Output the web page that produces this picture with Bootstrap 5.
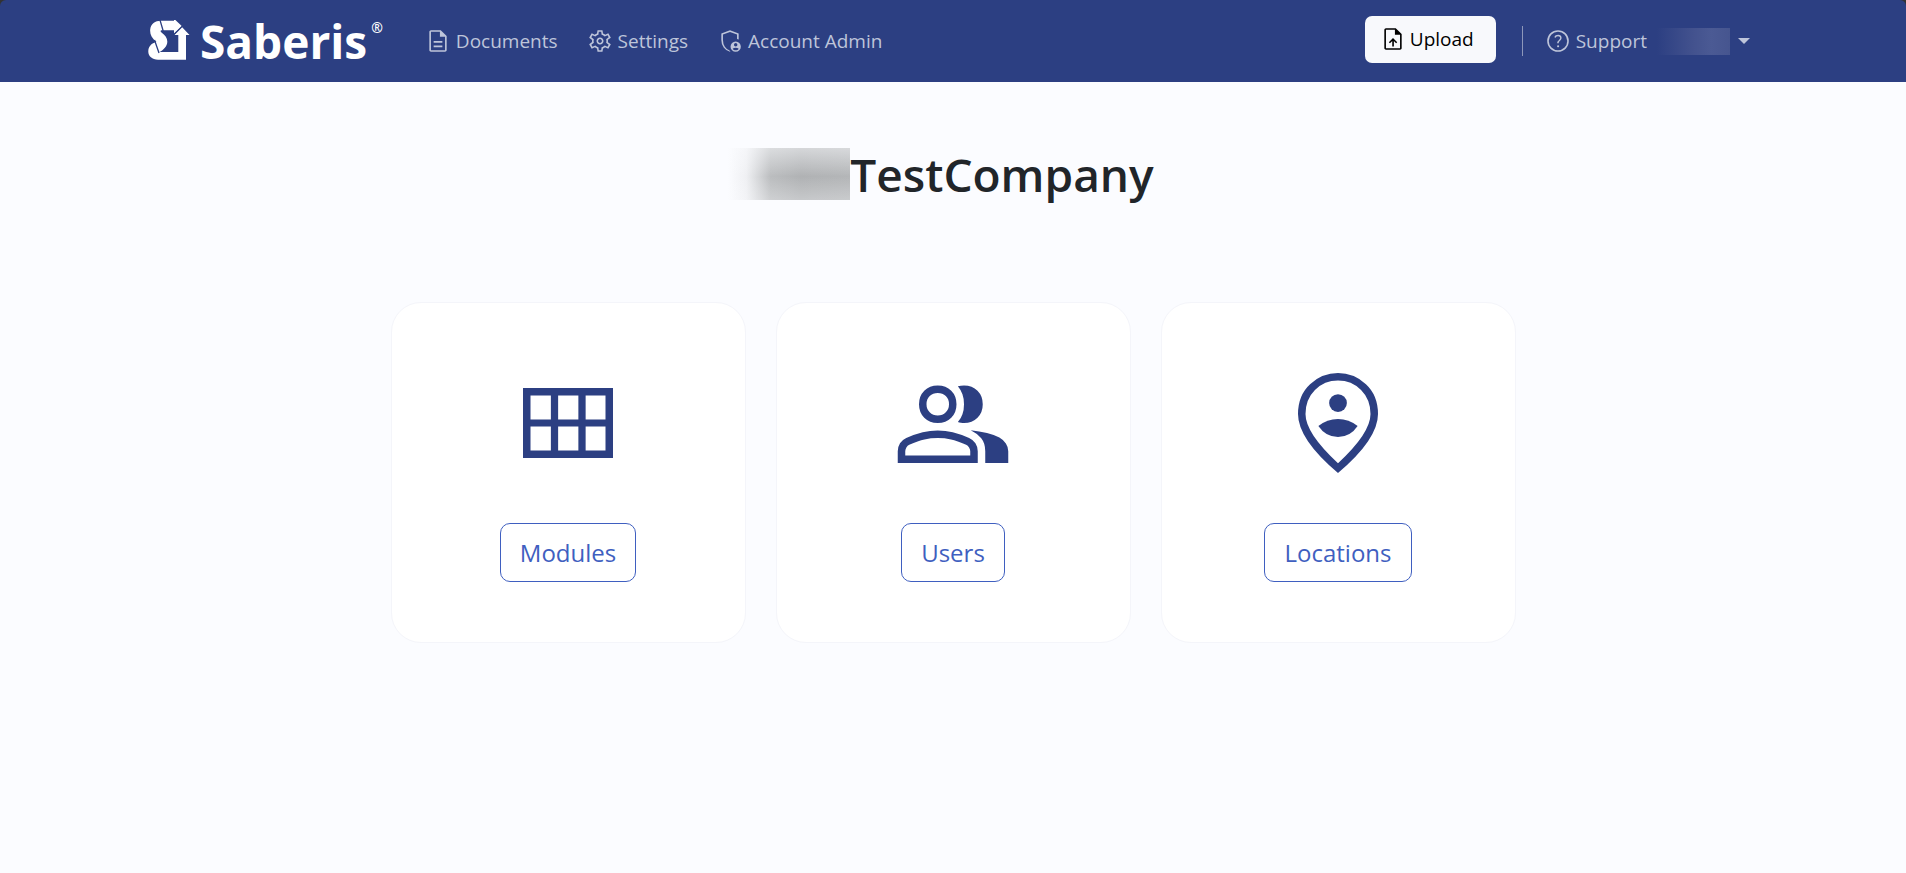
<!DOCTYPE html>
<html lang="en">
<head>
<meta charset="utf-8">
<meta name="viewport" content="width=device-width, initial-scale=1">
<title>Saberis</title>
<link href="https://cdn.jsdelivr.net/npm/bootstrap@5.3.0/dist/css/bootstrap.min.css" rel="stylesheet">
<style>
:root { --brand: #2c3f82; --accent: #3f5fc0; --nav-text: #bec5da; }
body { background: #fbfcff; font-family: "Open Sans", sans-serif; font-size: 19px; line-height: 30px; color: #212529; }
svg { display: block; flex: none; fill: currentColor; }
.page-top { background: #333; }
.site-nav { background: var(--brand); min-height: 82px; border-radius: 6px 6px 0 0; }
.site-wrap { max-width: 1650px; padding: 0 28px 0 20px; row-gap: 8px; }
.site-logo { color: #fff; gap: 10px; margin-right: 42px; }
.logo-word { font-size: 46px; line-height: 50px; font-weight: 700; }
.logo-reg { font-size: 14px; line-height: 24px; font-weight: 600; margin-left: -6px; }
.logo-cut { fill: none; stroke: var(--brand); stroke-width: 1.3; }
.site-links { column-gap: 29px; }
.site-link { display: flex; align-items: center; gap: 5px; color: var(--nav-text); text-decoration: none; white-space: nowrap; }
.site-link:hover { color: #fff; }
.nav-rule { width: 1px; height: 30px; margin: 0 22px 0 26px; background: #8d97ba; }
.btn-upload { display: flex; align-items: center; gap: 4px; height: 47px; padding: 0 22px 0 15px; border: 0; border-radius: 7px; background: #f8f9fc; color: #000; }
.btn-upload:hover { background: #e2e6f0; }
.user-toggle { display: flex; align-items: center; gap: 8px; margin-left: 10px; padding: 0; border: 0; background: none; }
.user-mask { width: 73px; height: 27px; background: linear-gradient(90deg, var(--brand), #43528e 50%, #4b5a94 75%, #46558f); }
.user-caret { border: 6px solid transparent; border-top-color: var(--nav-text); border-bottom: 0; }
.company { margin: 62px 0 98px; padding-right: 24px; font-size: 46px; line-height: 60px; font-weight: 600; }
.company-mask { width: 122px; height: 52px; background: linear-gradient(180deg, rgba(251,252,255,.5), rgba(251,252,255,0) 55%, rgba(251,252,255,.3)), linear-gradient(90deg, #fbfcff, #eff0f3 15%, #bbbdbf 35%, #b0b2b4 60%, #b4b6b8); }
.tile-wrap { max-width: 1125px; }
.tile-row { --bs-gutter-x: 30px; --bs-gutter-y: 30px; margin-top: 0; }
.tile-row > .col { margin-top: 0; margin-bottom: var(--bs-gutter-y); }
.tile { gap: 40px; border: 1px solid #f4f5fa; border-radius: 30px; background: #fff; padding: 60px 16px; }
.tile svg { color: var(--brand); }
.btn-tile { height: 59px; padding: 0 19px; border: 1px solid var(--accent); border-radius: 10px; color: var(--accent); background: #fff; font-size: 24px; }
.btn-tile:hover { background: var(--accent); color: #fff; }
</style>
</head>
<body>
<header class="page-top">
  <nav class="site-nav d-flex align-items-center" aria-label="Main">
    <div class="site-wrap container-fluid d-flex flex-wrap flex-lg-nowrap align-items-center">
      <a class="site-logo d-flex align-items-center text-decoration-none" href="#">
        <svg width="42" height="42" viewBox="3 4 42 42" aria-hidden="true">
          <path d="M16 4.700H29V2.700L37 10.200L29 17.500V14.300H17C15.500 14.300 15 15.500 16.500 16.500C20 19 22.500 22 22.300 26C22.200 30 18.500 34 14.500 36H33.300V19H29L36.700 10.700L44.500 19H41V43.700H13C7 43.700 3 40 3.300 35C3.500 30.500 6.500 27 11.500 26C6.500 22 4.800 18 5.200 13.500C5.800 8 10 4.700 16 4.700Z"/>
          <path class="logo-cut" d="M15 4L18.200 15M28.500 19L38.500 9M9.500 24L14 37"/>
        </svg>
        <span class="logo-word">Saberis</span><span class="logo-reg align-self-start">®</span>
      </a>
      <div class="site-links d-flex flex-wrap">
        <a class="site-link" href="#">
          <svg width="26" height="26" viewBox="0 -960 960 960" aria-hidden="true"><path d="M319-250h322v-60H319v60Zm0-170h322v-60H319v60ZM220-80q-24 0-42-18t-18-42v-680q0-24 18-42t42-18h361l219 219v521q0 24-18 42t-42 18H220Zm331-554v-186H220v680h520v-494H551Z"/></svg>
          Documents</a>
        <a class="site-link" href="#">
          <svg width="26" height="26" viewBox="0 -960 960 960" aria-hidden="true"><path d="m388-80-20-126q-19-7-40-19t-37-25l-118 54-93-164 108-79q-2-9-2.500-20.500T185-480q0-9 .5-20.500T188-521L80-600l93-164 118 54q16-13 37-25t40-18l20-127h184l20 126q19 7 40.500 18.500T669-710l118-54 93 164-108 77q2 10 2.500 21.500t.5 21.500q0 10-.5 21t-2.500 21l108 78-93 164-118-54q-16 13-36.500 25.500T592-206L572-80H388Zm48-60h88l14-112q33-8 62.500-25t53.500-41l106 46 40-72-94-69q4-17 6.500-33.500T715-480q0-17-2-33.500t-7-33.500l94-69-40-72-106 46q-23-26-52-43.500T538-708l-14-112h-88l-14 112q-34 7-63.500 24T306-642l-106-46-40 72 94 69q-4 17-6.500 33.500T245-480q0 17 2.500 33.500T254-413l-94 69 40 72 106-46q24 24 53.500 41t62.500 25l14 112Zm44-210q54 0 92-38t38-92q0-54-38-92t-92-38q-54 0-92 38t-38 92q0 54 38 92t92 38Zm0-60q-29 0-49.500-20.500T410-480q0-29 20.500-49.500T480-550q29 0 49.500 20.500T550-480q0 29-20.500 49.500T480-410Z"/></svg>
          Settings</a>
        <a class="site-link" href="#">
          <svg width="26" height="26" viewBox="0 -960 960 960" aria-hidden="true"><path fill-rule="evenodd" d="M480-80Q335-115 247.500-236T160-516v-245l320-120 320 120v228q-28-12-60-17v-170l-260-96-260 96v204q0 145 70 247t161 135q22 33 49 54ZM690-80q-79 0-134.500-55.500T500-270q0-79 55.500-134.500T690-460q79 0 134.500 55.500T880-270q0 79-55.500 134.500T690-80Zm0-200q26 0 44-18t18-44q0-26-18-44t-44-18q-26 0-44 18t-18 44q0 26 18 44t44 18Zm0 144q35 0 64-16t47-44q-26-16-54-24t-57-8q-29 0-57 8t-54 24q18 28 47 44t64 16Z"/></svg>
          Account Admin</a>
      </div>
      <div class="d-flex align-items-center ms-auto">
        <button class="btn-upload mb-1" type="button">
          <svg width="26" height="26" viewBox="0 -960 960 960" aria-hidden="true"><path d="M452-202h60v-201l82 82 42-42-156-152-154 154 42 42 84-84v201ZM220-80q-24 0-42-18t-18-42v-680q0-24 18-42t42-18h361l219 219v521q0 24-18 42t-42 18H220Zm331-554v-186H220v680h520v-494H551Z"/></svg>
          Upload</button>
        <span class="nav-rule"></span>
        <a class="site-link" href="#">
          <svg width="26" height="26" viewBox="0 -960 960 960" aria-hidden="true"><path d="M484-247q16 0 27-11t11-27q0-16-11-27t-27-11q-16 0-27 11t-11 27q0 16 11 27t27 11Zm-35-146h59q0-26 6.500-47.500T555-490q31-26 44-51t13-55q0-53-34.500-85T486-713q-49 0-86.500 24.500T345-621l53 20q11-28 33-43.500t52-15.500q34 0 55 18.500t21 47.500q0 22-13 41.500T508-512q-30 26-44.500 51.500T449-393Zm31 313q-82 0-155-31.500t-127.500-86Q143-252 111.500-325T80-480q0-83 31.500-156t86-127Q252-817 325-848.500T480-880q83 0 156 31.500T763-763q54 54 85.500 127T880-480q0 82-31.500 155T763-197.500q-54 54.500-127 86T480-80Zm0-60q142 0 241-99.500T820-480q0-142-99-241t-241-99q-141 0-240.500 99T140-480q0 141 99.500 240.500T480-140Z"/></svg>
          Support</a>
        <button class="user-toggle" type="button" aria-label="Account menu"><span class="user-mask"></span><span class="user-caret"></span></button>
      </div>
    </div>
  </nav>
</header>
<main class="container-fluid">
  <h1 class="company d-flex align-items-center justify-content-center"><span class="company-mask"></span>TestCompany</h1>
  <div class="tile-wrap mx-auto">
    <div class="row tile-row row-cols-1 row-cols-md-3">
      <div class="col">
        <div class="tile d-flex flex-column align-items-center">
          <svg width="120" height="120" viewBox="0 -960 960 960" aria-hidden="true"><path fill-rule="evenodd" d="M120-760H840V-200H120ZM180-700V-508H343V-700ZM401-700V-508H563V-700ZM621-700V-508H780V-700ZM180-452V-260H343V-452ZM401-452V-260H563V-452ZM621-452V-260H780V-452Z"/></svg>
          <button class="btn-tile" type="button">Modules</button>
        </div>
      </div>
      <div class="col">
        <div class="tile d-flex flex-column align-items-center">
          <svg width="120" height="120" viewBox="0 -960 960 960" aria-hidden="true"><path d="M38-160v-94q0-35 18-63.500t50-42.500q73-32 131.500-46T358-420q62 0 120 14t131 46q32 14 50.500 42.500T678-254v94H38Zm700 0v-94q0-63-32-103.500T622-423q69 8 130 23.500t99 35.500q33 19 52 47t19 63v94H738ZM358-481q-66 0-108-42t-42-108q0-66 42-108t108-42q66 0 108 42t42 108q0 66-42 108t-108 42Zm360-150q0 66-42 108t-108 42q-11 0-24.500-1.500T519-488q24-25 36.500-61.500T568-631q0-45-12.500-79.500T519-774q11-3 24.500-5t24.500-2q66 0 108 42t42 108ZM98-220h520v-34q0-16-9.500-31T585-306q-72-32-121-43t-106-11q-57 0-106.500 11T130-306q-14 6-23 21t-9 31v34Zm260-321q39 0 64.500-25.500T448-631q0-39-25.500-64.500T358-721q-39 0-64.500 25.500T268-631q0 39 25.500 64.500T358-541Z"/></svg>
          <button class="btn-tile" type="button">Users</button>
        </div>
      </div>
      <div class="col">
        <div class="tile d-flex flex-column align-items-center">
          <svg width="120" height="120" viewBox="0 -960 960 960" aria-hidden="true"><path fill-rule="evenodd" d="M480-80Q319-217 239.500-334.500T160-552q0-150 96.500-239T480-880q127 0 223.500 89T800-552q0 100-79.500 217.500T480-80ZM480-159Q609-279 674.500-377T740-552q0-117-75.500-192.500T480-820q-109 0-184.500 75.500T220-552q0 77 65.500 175T480-159Z"/><circle cx="480" cy="-640" r="71"/><path d="M323-456Q393-512 480-512T637-456Q578-368 480-368T323-456Z"/></svg>
          <button class="btn-tile" type="button">Locations</button>
        </div>
      </div>
    </div>
  </div>
</main>
<script src="https://cdn.jsdelivr.net/npm/bootstrap@5.3.0/dist/js/bootstrap.bundle.min.js"></script>
</body>
</html>
